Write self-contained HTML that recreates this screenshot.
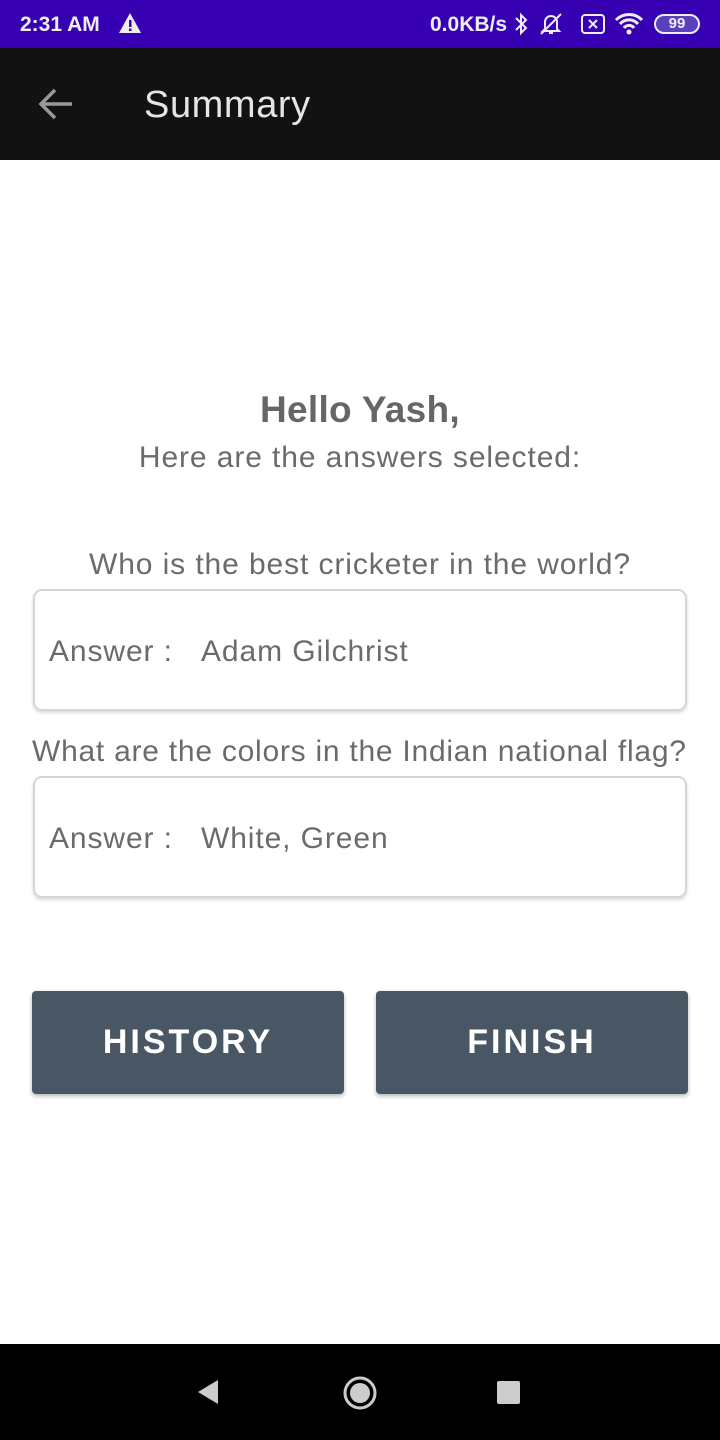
<!DOCTYPE html>
<html><head><style>
*{margin:0;padding:0;box-sizing:border-box}
body{width:720px;height:1440px;background:#fff;font-family:"Liberation Sans",sans-serif;position:relative;overflow:hidden;color:#6b6b6b}
.sb{position:absolute;top:0;left:0;width:720px;height:48px;background:#3700b3;color:#eee;font-weight:bold;font-size:21px}
.ab{position:absolute;top:48px;left:0;width:720px;height:112px;background:#121212}
.t{position:absolute;white-space:nowrap}
.q{font-size:30px;letter-spacing:0.9px}
.box{position:absolute;left:33px;width:654px;height:122px;border:2px solid #d6d6d6;border-radius:9px;box-shadow:0 2px 3px rgba(0,0,0,.15)}
.btn{position:absolute;top:991px;width:312px;height:103px;background:#485763;border-radius:4px;color:#fff;font-size:34px;font-weight:bold;letter-spacing:3px;text-align:center;line-height:103px;box-shadow:0 2px 4px rgba(0,0,0,.3)}
.nav{position:absolute;top:1344px;left:0;width:720px;height:96px;background:#000}
</style></head><body>
<div class="sb">
<span class="t" style="left:20px;top:13px">2:31 AM</span>
<svg class="t" style="left:118px;top:12px" width="24" height="22"><path d="M12 1L23 21H1Z" fill="#eee"/><rect x="11" y="8" width="2.5" height="7" fill="#3700b3"/><rect x="11" y="16.5" width="2.5" height="2.5" fill="#3700b3"/></svg>
<span class="t" style="left:430px;top:13px">0.0KB/s</span>
<svg class="t" style="left:513px;top:12px" width="16" height="24"><path d="M3 6l10 10-5 5V3l5 5L3 18" stroke="#eee" stroke-width="2" fill="none"/></svg>
<svg class="t" style="left:538px;top:11px" width="26" height="26"><path d="M7 18V11a6 6 0 0 1 12 0v7l2 2H5z" stroke="#eee" stroke-width="2" fill="none"/><path d="M11 22h4M3 23L23 3" stroke="#eee" stroke-width="2"/></svg>
<svg class="t" style="left:580px;top:13px" width="26" height="22"><rect x="2" y="2" width="22" height="18" rx="3" fill="none" stroke="#eee" stroke-width="2"/><path d="M9 7l8 8M17 7l-8 8" stroke="#eee" stroke-width="2"/></svg>
<svg class="t" style="left:614px;top:12px" width="30" height="24"><path d="M2 8a18 18 0 0 1 26 0M6 12a12 12 0 0 1 18 0M10 16a6 6 0 0 1 10 0" stroke="#eee" stroke-width="3" fill="none"/><circle cx="15" cy="20" r="2.5" fill="#eee"/></svg>
<div class="t" style="left:654px;top:14px;width:46px;height:20px;border:2px solid #eee;border-radius:10px;background:#5a3fc0;font-size:15px;text-align:center;line-height:16px">99</div>
</div>
<div class="ab">
<svg class="t" style="left:38px;top:40px" width="36" height="32"><path d="M34 16H4M17 2L3 16l14 14" stroke="#999" stroke-width="3.5" fill="none"/></svg>
<span class="t" style="left:144px;top:36px;color:#e6e6e6;font-size:38px;letter-spacing:0.6px">Summary</span>
</div>
<div class="t" style="left:0;width:720px;text-align:center;top:389px;font-size:37px;font-weight:bold;color:#666;letter-spacing:0.3px">Hello Yash,</div>
<div class="t q" style="left:0;width:720px;text-align:center;top:441px">Here are the answers selected:</div>
<div class="t q" style="left:0;width:720px;text-align:center;top:548px">Who is the best cricketer in the world?</div>
<div class="box" style="top:589px"></div>
<span class="t q" style="left:49px;top:635px">Answer :</span><span class="t q" style="left:201px;top:635px">Adam Gilchrist</span>
<div class="t q" style="left:32px;top:735px;letter-spacing:0.75px">What are the colors in the Indian national flag?</div>
<div class="box" style="top:776px"></div>
<span class="t q" style="left:49px;top:822px">Answer :</span><span class="t q" style="left:201px;top:822px">White, Green</span>
<div class="btn" style="left:32px">HISTORY</div>
<div class="btn" style="left:376px">FINISH</div>
<div class="nav">
<svg class="t" style="left:196px;top:34px" width="24" height="28"><path d="M22 2V26L2 14Z" fill="#ccc"/></svg>
<svg class="t" style="left:342px;top:31px" width="36" height="36"><circle cx="18" cy="18" r="15" stroke="#ccc" stroke-width="3" fill="none"/><circle cx="18" cy="18" r="10" fill="#ccc"/></svg>
<div class="t" style="left:497px;top:37px;width:23px;height:23px;background:#ccc;border-radius:2px"></div>
</div>
</body></html>
